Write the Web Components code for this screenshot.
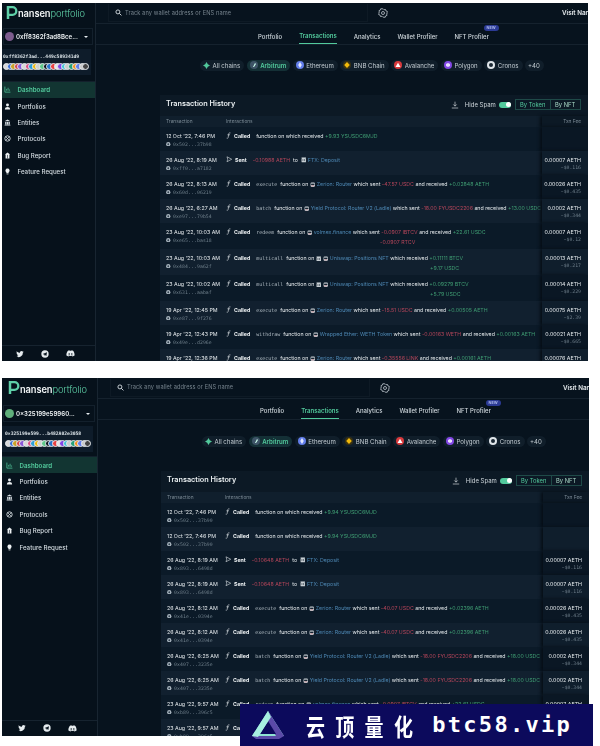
<!DOCTYPE html>
<html lang="en"><head><meta charset="utf-8"><title>Nansen Portfolio</title>
<style>
html,body{margin:0;background:#fff;font-family:Inter,"Noto Sans",sans-serif}
body{width:600px;height:746px;overflow:hidden;position:relative}
</style></head><body>
<x-page></x-page>
<x-watermark></x-watermark>
<script>
const Icons={
 search:'<svg viewBox="0 0 12 12" width="7" height="7"><circle cx="5" cy="5" r="3.4" fill="none" stroke="#dfe6ea" stroke-width="1.5"/><path d="M7.5 7.5L11 11" stroke="#dfe6ea" stroke-width="1.6"/></svg>',
 gear:'<svg viewBox="0 0 12 12" width="10" height="10"><path d="M6 .8l1.2 1.3 1.8-.3.5 1.7 1.7.6-.4 1.8L11 6l-.6 1.2.4 1.7-1.7.6-.5 1.7-1.8-.3L6 11.2l-1.2-1.3-1.8.3-.5-1.7-1.7-.6.4-1.7L1 6l.6-1.1-.4-1.8 1.7-.6.5-1.7 1.8.3z" fill="none" stroke="#c9d2d8" stroke-width=".9"/><circle cx="6" cy="6" r="1.8" fill="none" stroke="#c9d2d8" stroke-width=".9"/></svg>',
 chart:'<svg viewBox="0 0 12 12" width="7" height="7"><path d="M1.5 1v9.5H11" fill="none" stroke="#52c99c" stroke-width="1.3"/><path d="M4.5 8V5M7 8V3M9.5 8V6" stroke="#52c99c" stroke-width="1.3"/></svg>',
 user:'<svg viewBox="0 0 12 12" width="7" height="7"><circle cx="6" cy="3.4" r="2.5" fill="#eef2f4"/><path d="M1.5 11c0-3 1.8-4.3 4.5-4.3S10.500 8 10.500 11z" fill="#eef2f4"/></svg>',
 bank:'<svg viewBox="0 0 12 12" width="7" height="7"><path d="M6 1l5 2.800H1z M2 5h8v4.500H2z M1 10h10v1.300H1z" fill="#dce3e7"/><path d="M4.300 5v4.500M7.700 5v4.500" stroke="#0a1622" stroke-width=".8"/></svg>',
 proto:'<svg viewBox="0 0 12 12" width="7" height="7"><circle cx="6" cy="6" r="4.600" fill="none" stroke="#dce3e7" stroke-width="1.500"/><path d="M3 3l6 6M9 3l-6 6" stroke="#dce3e7" stroke-width="1.200"/></svg>',
 bug:'<svg viewBox="0 0 12 12" width="7" height="7"><path d="M6 .8l4.500 3.500H9.300V11H2.700V4.300H1.500z" fill="#eef2f4"/><path d="M6 5v6" stroke="#0a1622"/></svg>',
 bulb:'<svg viewBox="0 0 12 12" width="7" height="7"><path d="M6 .8a3.600 3.600 0 0 1 2 6.600V9H4V7.400A3.600 3.600 0 0 1 6 .8z" fill="#eef2f4"/><path d="M4.400 10.300h3.200" stroke="#eef2f4" stroke-width="1.200"/></svg>',
 twitter:'<svg viewBox="0 0 24 24" width="8" height="8"><path fill="#e6ecef" d="M23 5c-.8.400-1.700.600-2.600.800.900-.600 1.700-1.500 2-2.500-.900.500-1.900.900-2.900 1.100A4.600 4.600 0 0 0 11.700 8.600C8 8.400 4.600 6.600 2.300 3.800c-1.200 2.100-.600 4.800 1.400 6.100-.700 0-1.400-.200-2.100-.600 0 2.200 1.600 4.200 3.700 4.600-.700.200-1.400.200-2.100.100.600 1.900 2.300 3.200 4.300 3.200A9.300 9.300 0 0 1 .700 19.100 13 13 0 0 0 20.800 7.500c.900-.600 1.700-1.500 2.200-2.500z"/></svg>',
 telegram:'<svg viewBox="0 0 24 24" width="8" height="8"><circle cx="12" cy="12" r="11" fill="#e6ecef"/><path d="M5 12l13-5-2 11-4-3-2 2-.5-3.500L16 9l-7 4.500z" fill="#07131d"/></svg>',
 discord:'<svg viewBox="0 0 24 24" width="9" height="9"><path fill="#e6ecef" d="M19.500 5A18 18 0 0 0 15 3.600l-.6 1.200a16 16 0 0 0-4.800 0L9 3.600A18 18 0 0 0 4.500 5C1.600 9.300.8 13.400 1.200 17.500A18 18 0 0 0 6.700 20.300l1.200-1.900-1.900-.9.500-.4a12.800 12.800 0 0 0 11 0l.5.400-1.900.9 1.200 1.900a18 18 0 0 0 5.500-2.800c.500-4.800-.800-8.900-3.300-12.500z"/><circle cx="8.500" cy="13" r="2" fill="#07131d"/><circle cx="15.500" cy="13" r="2" fill="#07131d"/></svg>',
 download:'<svg viewBox="0 0 12 12" width="8" height="8"><path d="M6 1v6.500M3.500 5.200L6 7.800l2.500-2.600M1.200 10.500h9.600" fill="none" stroke="#d6dde1" stroke-width="1"/></svg>',
 fn:'<svg viewBox="0 0 8 10" width="5.500" height="7"><path d="M6.500 1.200C5 .6 4.300 1.200 4 3L3.200 7.500C3 9 2.200 9.400 1 8.900M2 4h3.800" fill="none" stroke="#e4e9ec" stroke-width=".9"/></svg>',
 sent:'<svg viewBox="0 0 10 10" width="6.500" height="6.500"><path d="M1.500 1.200L8.800 5 1.500 8.800l1.200-3.800z" fill="none" stroke="#e4e9ec" stroke-width=".9"/></svg>',
 ebank:'<svg viewBox="0 0 10 10" width="5.500" height="5.500"><rect x="1" y="2" width="8" height="7.500" rx="1" fill="#cfd6da"/><path d="M1 1h8" stroke="#cfd6da"/><path d="M3.500 3.500v4M6.500 3.500v4" stroke="#101e2c"/></svg>',
 erouter:'<svg viewBox="0 0 10 10" width="5.500" height="5.500"><rect x="1" y="1" width="8" height="8" rx="2" fill="#c9d0d5"/><rect x="2" y="3" width="6" height="2.400" fill="#101e2c"/><rect x="2.500" y="6.600" width="5" height="1" fill="#a3434f"/></svg>',
 chainDot:'<svg viewBox="0 0 8 8" width="4.500" height="4.500"><circle cx="4" cy="4" r="3.800" fill="#a9b5bf"/><circle cx="4" cy="4" r="1.600" fill="#31414f"/></svg>'
};
function shadow(el,html){const r=el.shadowRoot||el.attachShadow({mode:'open'});r.innerHTML=html;return r}

class XPage extends HTMLElement{
 connectedCallback(){
  shadow(this,`<style>:host{display:flex;flex-direction:column;gap:16.500px;padding:3px 0 0 2px}</style>`);
  [SHOTS[0],SHOTS[1]].forEach(s=>{const e=document.createElement('x-shot');e.config=s;this.shadowRoot.appendChild(e)});
 }
}
class XShot extends HTMLElement{
 connectedCallback(){
  const c=this.config;
  shadow(this,`<style>:host{display:flex;width:${c.w}px;height:358px;overflow:hidden;background:#07131e;color:#dfe6ea;filter:blur(.3px)}
  .main{flex:1;min-width:0;display:flex;flex-direction:column}</style>
  <x-sidebar></x-sidebar><div class="main"><x-topbar></x-topbar><x-tabs></x-tabs><x-chains style="--chain-extra:${c.chainExtra}px"></x-chains><x-tx-card></x-tx-card></div>`);
  const q=s=>this.shadowRoot.querySelector(s);
  q('x-sidebar').config=c;q('x-tx-card').config=c;
  q('x-sidebar').render();q('x-tx-card').render();
 }
}
class XSidebar extends HTMLElement{
 render(){
  const c=this.config;
  const cols=['#d8d8d8','#3b6fd8','#c9a227','#d84a4a','#8a5ad8','#d8d8d8','#e04f86','#2f9fd8','#f0b90b','#d0d0d0','#5fc98a','#101820','#2775ca','#e84142','#e5e5e5','#8247e5','#42c6d8','#ccc','#26a17b','#f7931a','#627eea','#c8c8c8','#444'];
  const nav=[['chart','Dashboard',1],['user','Portfolios'],['bank','Entities'],['proto','Protocols'],['bug','Bug Report'],['bulb','Feature Request']];
  shadow(this,`<style>
  :host{display:flex;flex-direction:column;width:${c.side}px;flex:none;box-sizing:border-box;border-right:1px solid #182531;background:#06111b}
  .logo{height:${c.logoH}px;display:flex;align-items:center;gap:0;padding:0 0 0 ${c.logoPad}px;font-size:9.300px;letter-spacing:-.1px;flex:none}
  .logo svg{margin:-3px 0 0 0}
  .logo b{font-weight:600;color:#f0f4f5}.logo i{font-style:normal;font-weight:300;color:#5fd0a8}
  .sel{margin:4px 2px 0 1px;height:17px;display:flex;align-items:center;border:1px solid #13202c;box-sizing:border-box;padding:0 4px 0 1px;gap:2px;font:600 6.100px "Inter",sans-serif;color:#edf1f3;flex:none}
  .av{width:9px;height:9px;border-radius:50%;background:${c.avatar};flex:none}
  .sel span{flex:1;white-space:nowrap;overflow:hidden}
  .car{flex:none!important;width:0;height:0;border:2px solid transparent;border-top:2.500px solid #e6ecef;border-bottom:0}
  .wal{margin:4px 4px 0 0;height:26px;background:#0e1c2a;padding:4px 0 0 ${c.walPad}px;box-sizing:border-box;flex:none}
  .addr{font:700 4.700px "DejaVu Sans Mono",monospace;color:#dbe3e8;white-space:nowrap;height:7px;line-height:7px}
  .toks{display:flex;margin-top:2.500px}.toks u{display:block;width:7px;height:7px;border-radius:50%;margin-right:-3.400px;border:.7px solid #e8ecef;box-sizing:border-box;flex:none}
  nav{margin-top:${c.navTop}px;border-top:1px solid #13202c;display:flex;flex-direction:column}
  .it{height:16.400px;display:flex;align-items:center;font-size:6.200px;font-weight:500;color:#d5dde2;padding-left:${c.navPad}px;gap:6.500px}
  .it svg{flex:none}
  .it.on{background:#123532;color:#52c99c;font-weight:600}
  .sp{flex:1}
  footer{height:16px;border-top:1px solid #16232f;display:flex;align-items:center;gap:17px;padding-left:${c.footPad}px;flex:none;box-sizing:border-box}
  </style>
  <div class="logo"><svg width="12" height="15" viewBox="0 0 12 15"><path d="M2 1v13" stroke="#5fd0a8" stroke-width="2.500"/><path d="M2 2.200h4.500a3.800 3.800 0 0 1 0 7.600H2" fill="none" stroke="#5fd0a8" stroke-width="2.300"/></svg><b>nansen</b><i>portfolio</i></div>
  <div class="sel"><div class="av"></div><span>${c.wallet}</span><div class="car"></div></div>
  <div class="wal"><div class="addr">${c.addr}</div><div class="toks">${cols.map(k=>`<u style="background:${k}"></u>`).join('')}</div></div>
  <nav>${nav.map(n=>`<div class="it ${n[2]?'on':''}">${Icons[n[0]]}<span>${n[1]}</span></div>`).join('')}</nav>
  <div class="sp"></div>
  <footer>${Icons.twitter}${Icons.telegram}${Icons.discord}</footer>`);
 }
}
class XTopbar extends HTMLElement{
 connectedCallback(){
  shadow(this,`<style>:host{display:flex;height:21px;flex:none;box-sizing:border-box;border-bottom:1px solid #15222e;align-items:center;background:#07131e}
  .s{margin-left:12px;width:260px;height:18px;display:flex;align-items:center;gap:3px;padding-left:6px;box-sizing:border-box;border:1px solid #0e1a25;border-width:0 1px 1px 1px;font-size:5.650px;color:#76838d;letter-spacing:.1px}
  .g{margin-left:9.500px;display:flex}
  .v{margin-left:auto;width:26px;overflow:hidden;white-space:nowrap;font-size:6.300px;font-weight:600;color:#e7ecef;flex:none}</style>
  <div class="s">${Icons.search}<span>Track any wallet address or ENS name</span></div><div class="g">${Icons.gear}</div><div class="v">Visit Nansen</div>`);
 }
}
class XTabs extends HTMLElement{
 connectedCallback(){
  shadow(this,`<style>:host{display:flex;height:21px;flex:none;box-sizing:border-box;border-bottom:1px solid #15222e;padding-left:162px;gap:17px;font-size:6px;font-weight:500;color:#cfd7dc;background:#07131e}
  .t{position:relative;height:20px;display:flex;align-items:center;padding-top:4px;box-sizing:border-box;white-space:nowrap}
  .on{color:#52c99c;font-weight:600;border-bottom:1px solid #52c99c}
  .new{position:absolute;left:29px;top:1px;background:#2b3a94;color:#aab6ea;font-size:3.800px;font-weight:700;padding:1px 3px;border-radius:3px;line-height:4px}</style>
  <div class="t">Portfolio</div><div class="t on">Transactions</div><div class="t">Analytics</div><div class="t">Wallet Profiler</div><div class="t">NFT Profiler<span class="new">NEW</span></div>`);
 }
}
class XChains extends HTMLElement{
 connectedCallback(){
  const dot=(b,inner)=>`<svg width="8" height="8" viewBox="0 0 8 8"><circle cx="4" cy="4" r="4" fill="${b}"/>${inner||''}</svg>`;
  const ps=[['All chains','<svg width="7" height="7" viewBox="0 0 8 8"><path d="M4 0l1.500 2.500L4 4 2.500 2.500zM4 8L2.500 5.500 4 4l1.500 1.500zM0 4l2.500-1.500L4 4 2.500 5.500zM8 4L5.500 5.500 4 4l1.500-1.500z" fill="#52c99c"/></svg>',0],
  ['Arbitrum',dot('#3d5366','<path d="M3 6l2-4 1 1-2 3z" fill="#cfe"/>'),1],
  ['Ethereum',dot('#627eea','<path d="M4 1L2.200 4 4 7l1.800-3z" fill="#dfe6ff"/>'),0],
  ['BNB Chain',dot('#3a3212','<path d="M4 1l2.800 3L4 7 1.200 4z" fill="#f0b90b"/>'),0],
  ['Avalanche',dot('#d8393c','<path d="M4 1.800L6.500 6h-5z" fill="#fff"/>'),0],
  ['Polygon',dot('#8247e5','<path d="M2 3l2-1 2 1v2L4 6 2 5z" fill="#e6dcff"/>'),0],
  ['Cronos',dot('#dfe5e9','<circle cx="4" cy="4" r="2" fill="#1a2732"/>'),0],['+40','',0]];
  shadow(this,`<style>:host{display:flex;height:calc(50px + var(--chain-extra,0px));flex:none;box-sizing:border-box;padding:calc(14.500px + var(--chain-extra,0px)) 0 0 104px;gap:2.500px;background:#07131e}
  .p{height:11px;border-radius:6px;background:#101e2a;display:flex;align-items:center;gap:2.500px;padding:0 4px 0 3px;font-size:6.100px;color:#c3ccd2;white-space:nowrap}
  .p.a{background:#143036;color:#52c99c;font-weight:600}</style>
  ${ps.map(p=>`<div class="p ${p[2]?'a':''}">${p[1]}<span>${p[0]}</span></div>`).join('')}`);
 }
}
class XTxCard extends HTMLElement{
 render(){
  const c=this.config;
  shadow(this,`<style>:host{display:flex;flex-direction:column;margin-left:${c.cardL}px;background:#0c1925;flex:1;min-height:0;overflow:hidden}
  .hd{height:20.500px;display:flex;align-items:center;padding:0 7.500px 3.500px 6px;box-sizing:border-box;flex:none}
  h2{margin:0;font-size:7.300px;font-weight:600;color:#e9eef0;flex:1}
  .r{display:flex;align-items:center;font-size:6px;color:#cdd5da;margin-top:2.500px}
  .r svg{margin-right:3px}
  .tg{width:12px;height:6px;border-radius:3px;background:#52c99c;margin:0 3.500px;position:relative}
  .tg:after{content:"";position:absolute;right:.5px;top:.5px;width:5px;height:5px;border-radius:50%;background:#fff}
  .b{border:1px solid #1f4a48;height:11px;box-sizing:border-box;display:flex;align-items:center;padding:0 4.300px;color:#52c99c;font-size:5.800px}
  .b+.b{border-left:0;color:#a8d8c6}
  .ch{height:11.500px;flex:none;display:flex;background:#101f2d;font-size:4.800px;color:#7c8b96;align-items:center}
  .c1{width:${c.c1}px;padding-left:6px;box-sizing:border-box;flex:none}.c2{flex:1}
  .c3{width:46px;text-align:right;padding-right:7px;box-sizing:border-box;height:100%;line-height:11.500px;background:#0c1925;box-shadow:-2px 0 3px #060e16}
  </style>
  <div class="hd"><h2>Transaction History</h2><div class="r">${Icons.download}<span style="margin-left:3px">Hide Spam</span><div class="tg"></div><div class="b">By Token</div><div class="b">By NFT</div></div></div>
  <div class="ch"><div class="c1">Transaction</div><div class="c2">Interactions</div><div class="c3">Txn Fee</div></div>`);
  c.rows.forEach((d,i)=>{const e=document.createElement('x-tx-row');e.data=d;e.c1=c.c1;e.alt=i%2==1;this.shadowRoot.appendChild(e)});
 }
}
class XTxRow extends HTMLElement{
 connectedCallback(){
  const d=this.data,bg=this.alt?'#11202f':'#0b1a28',fbg=this.alt?'#0f1e2c':'#0a1724';
  shadow(this,`<style>:host{display:flex;height:${d.h||24}px;flex:none;background:${bg}}
  .c1{width:${this.c1}px;padding:5.500px 0 0 6px;box-sizing:border-box;flex:none;font-size:5.300px;color:#e4e9ec;white-space:nowrap}
  .h{margin-top:3px;display:flex;align-items:center;gap:2.500px;font:4.800px "DejaVu Sans Mono",monospace;color:#6f7f8b;letter-spacing:.1px}
  .c2{flex:1;min-width:0;overflow:hidden;padding-top:5px;font-size:5.250px;color:#e4e9ec;white-space:nowrap;line-height:7px}
  .c2 svg{vertical-align:-1px}
  .c2 b{font-weight:700;color:#eef2f4;margin:0 3px 0 2.500px}
  .m{font:5px "DejaVu Sans Mono",monospace;color:#aeb9c1}
  .e{color:#4d87b3}.n{color:#b5455a}.p{color:#3f9c72}
  .l2{margin-top:3px;display:block}
  .c3{width:46px;flex:none;padding:5.500px 7px 0 0;box-sizing:border-box;text-align:right;background:${fbg};box-shadow:-2px 0 3px #060e16;font-size:5.300px;color:#e4e9ec;white-space:nowrap}
  .c3 div{margin-top:2.700px;font:4.800px "DejaVu Sans Mono",monospace;color:#6f7f8b}
  </style>
  <div class="c1"><div>${d.t}</div><div class="h">${Icons.chainDot}<span>${d.x}</span></div></div>
  <div class="c2">${d.i}${d.l2?`<span class="l2" style="padding-left:${d.l2[1]}px">${d.l2[0]}</span>`:''}</div>
  <div class="c3">${d.f?`${d.f}<div>${d.u}</div>`:''}</div>`);
 }
}
class XWatermark extends HTMLElement{
 connectedCallback(){
  shadow(this,`<style>:host{position:absolute;left:240px;top:704px;width:353px;height:42px;background:#0c0a5c;display:flex;align-items:center;overflow:hidden}
  svg{margin-left:11px;flex:none}
  .z{margin-left:21px;font:700 19px/1 "Noto Sans CJK SC",sans-serif;color:#fff;letter-spacing:10.300px;transform:scaleY(1.25);white-space:nowrap;flex:none}
  .l{margin-left:9px;font:700 22px/1 "DejaVu Sans Mono",monospace;color:#fff;letter-spacing:2.300px;white-space:nowrap;flex:none}</style>
  <svg width="34" height="30" viewBox="0 0 34 30"><path d="M17 1L33 26H1z" fill="#8fe3d3"/><path d="M17 1l16 25-5 3H5l-4-3h24L17 13z" fill="#5b4aa8"/><path d="M17 11L25 24H9z" fill="#0c0a5c"/><path d="M1 26L17 1l3 6L7 27z" fill="#a6efe0"/></svg>
  <div class="z">云顶量化</div><div class="l">btc58.vip</div>`);
 }
}
const E=s=>`<span class="e">${s}</span>`,N=s=>`<span class="n">${s}</span>`,P=s=>`<span class="p">${s}</span>`,M=s=>`<span class="m">${s}</span>`;
const called=(f)=>`${Icons.fn}<b>Called</b> &nbsp;${f?M(f)+' &nbsp;':''}`;
const R=Icons.erouter,B=Icons.ebank;
const sent=(a,to)=>`${Icons.sent}<b>Sent</b> &nbsp;${N(a)} &nbsp;to &nbsp;${B} ${E(to)}`;
const zer=(a,b)=>`${called('execute')}function on ${R} ${E('Zerion: Router')} which sent ${N(a)} and received ${P(b)}`;
const yld=(a,b)=>`${called('batch')}function on ${R} ${E('Yield Protocol: Router V2 (Ladle)')} which sent ${N(a)} and received ${P(b)}`;
const vol=(a,b)=>`${called('redeem')}function on ${R} ${E('volmex.finance')} which sent ${N(a)} and received ${P(b)}`;
const uni=b=>`${called('multicall')}function on ${B} ${R} ${E('Uniswap: Positions NFT')} which received ${P(b)}`;
const SHOTS=[
 {w:586,side:94,cardL:64,c1:66,logoH:21,logoPad:4,navTop:5.500,navPad:2,chainExtra:0,wallet:'0xff8362f3ad8Bce...',addr:'0xff8362f3ad...449c589341d9',avatar:'#7d5c8e',walPad:1,footPad:14,
 rows:[
 {t:"12 Oct '22, 7:46 PM",x:'0x502...37b98',i:`${called()}function on which received ${P('+9.93 YSUSDC6MJD')}`},
 {t:"26 Aug '22, 8:19 AM",x:'0xff0...a7182',i:sent('-0.10988 AETH','FTX: Deposit'),f:'0.00007 AETH',u:'~$0.116'},
 {t:"26 Aug '22, 8:13 AM",x:'0x60d...06219',i:zer('-47.57 USDC','+0.02848 AETH'),f:'0.00026 AETH',u:'~$0.435'},
 {t:"26 Aug '22, 6:27 AM",x:'0xe97...79b54',i:yld('-18.00 FYUSDC2206','+13.00 USDC'),f:'0.0002 AETH',u:'~$0.344'},
 {h:26,t:"23 Aug '22, 10:03 AM",x:'0xe65...bas18',i:vol('-0.0907 IBTCV','+22.61 USDC'),l2:[N('-0.0907 RTCV'),154],f:'0.00007 AETH',u:'~$0.12'},
 {h:26,t:"23 Aug '22, 10:03 AM",x:'0x484...9a62f',i:uni('+0.11111 BTCV'),l2:[P('+9.17 USDC'),204],f:'0.00013 AETH',u:'~$0.217'},
 {h:26,t:"23 Aug '22, 10:02 AM",x:'0x631...aabaf',i:uni('+0.09279 BTCV'),l2:[P('+5.79 USDC'),204],f:'0.00014 AETH',u:'~$0.229'},
 {t:"19 Apr '22, 12:45 PM",x:'0xe87...9f276',i:zer('-15.51 USDC','+0.00505 AETH'),f:'0.00075 AETH',u:'~$2.39'},
 {t:"19 Apr '22, 12:43 PM",x:'0x49e...d296e',i:`${called('withdraw')}function on ${R} ${E('Wrapped Ether: WETH Token')} which sent ${N('-0.00163 WETH')} and received ${P('+0.00163 AETH')}`,f:'0.00021 AETH',u:'~$0.665'},
 {t:"19 Apr '22, 12:36 PM",x:'0x7a1...c03d2',i:`${called('execute')}function on ${R} ${E('Zerion: Router')} which sent ${N('-0.35556 LINK')} and received ${P('+0.00161 AETH')}`,f:'0.00076 AETH',u:'~$2.41'}
 ]},
 {w:587,side:96,cardL:63,c1:64,logoH:23.500,logoPad:6,navTop:4,navPad:4,chainExtra:1.500,wallet:'0×325199e59960...',addr:'0×325199e599...b482A02e3058',avatar:'#5fae7a',walPad:3,footPad:16,
 rows:[
 {t:"12 Oct '22, 7:46 PM",x:'0x502...37b90',i:`${called()}function on which received ${P('+9.94 YSUSDC6MJD')}`},
 {t:"12 Oct '22, 7:46 PM",x:'0x502...37b90',i:`${called()}function on which received ${P('+9.94 YSUSDC6MJD')}`},
 {t:"26 Aug '22, 8:19 AM",x:'0x893...6498d',i:sent('-0.10648 AETH','FTX: Deposit'),f:'0.00007 AETH',u:'~$0.116'},
 {t:"26 Aug '22, 8:19 AM",x:'0x893...6498d',i:sent('-0.10648 AETH','FTX: Deposit'),f:'0.00007 AETH',u:'~$0.116'},
 {t:"26 Aug '22, 8:12 AM",x:'0x41e...0394e',i:zer('-40.07 USDC','+0.02396 AETH'),f:'0.00026 AETH',u:'~$0.435'},
 {t:"26 Aug '22, 8:12 AM",x:'0x41e...0394e',i:zer('-40.07 USDC','+0.02396 AETH'),f:'0.00026 AETH',u:'~$0.435'},
 {t:"26 Aug '22, 6:25 AM",x:'0x407...3235e',i:yld('-18.00 FYUSDC2206','+18.00 USDC'),f:'0.0002 AETH',u:'~$0.344'},
 {t:"26 Aug '22, 6:25 AM",x:'0x407...3235e',i:yld('-18.00 FYUSDC2206','+18.00 USDC'),f:'0.0002 AETH',u:'~$0.344'},
 {t:"23 Aug '22, 9:57 AM",x:'0xb89...396c5',i:vol('-0.0907 IBTCV','+22.61 USDC'),f:'0.00007 AETH',u:'~$0.12'},
 {t:"23 Aug '22, 9:57 AM",x:'0xb89...396c5',i:vol('-0.0907 IBTCV','+22.61 USDC'),f:'0.00007 AETH',u:'~$0.12'}
 ]}
];
customElements.define('x-sidebar',XSidebar);
customElements.define('x-topbar',XTopbar);
customElements.define('x-tabs',XTabs);
customElements.define('x-chains',XChains);
customElements.define('x-tx-row',XTxRow);
customElements.define('x-tx-card',XTxCard);
customElements.define('x-shot',XShot);
customElements.define('x-watermark',XWatermark);
customElements.define('x-page',XPage);
</script>
</body></html>
